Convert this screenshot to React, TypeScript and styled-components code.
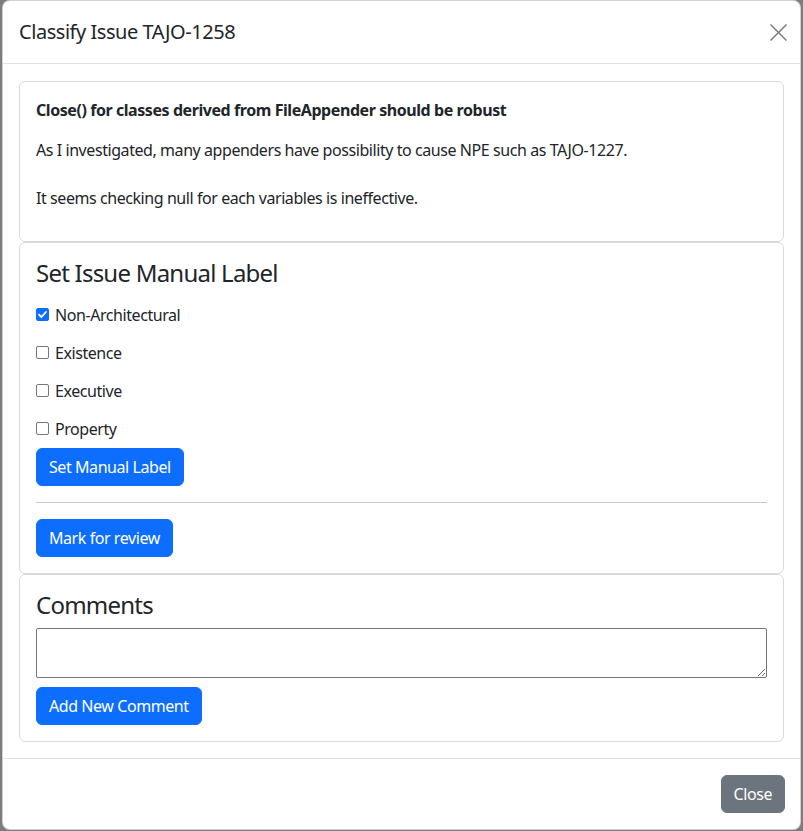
import React, { useState } from "react";
import styled, { createGlobalStyle } from "styled-components";

const GlobalStyle = createGlobalStyle`
  html, body {
    margin: 0;
    padding: 0;
  }
  body {
    font-family: "Noto Sans", "Open Sans", sans-serif;
    color: #212529;
    font-size: 16px;
    line-height: 1.5;
    letter-spacing: -0.027em;
  }
  * {
    box-sizing: border-box;
  }
`;

const SBackdrop = styled.div`
  position: relative;
  min-height: 831px;
  background: #7c7c7d;
  padding: 0 2px 1px 2px;
`;

const STopBar = styled.div`
  position: absolute;
  top: 0;
  left: 318px;
  width: 83px;
  height: 1px;
  background: #0c2d66;
`;

const SModal = styled.div`
  position: relative;
  width: 799px;
  background: #fff;
  border: 1px solid rgba(0, 0, 0, 0.175);
  border-radius: 8px;
  display: flex;
  flex-direction: column;
  overflow: hidden;
`;

const SModalHeader = styled.div`
  display: flex;
  align-items: center;
  justify-content: space-between;
  padding: 16px;
  border-bottom: 1px solid #dee2e6;
`;

const STitle = styled.h5`
  margin: 0;
  font-size: 20px;
  font-weight: 400;
  line-height: 30px;
  letter-spacing: -0.023em;
`;

const SCloseX = styled.button`
  width: 24px;
  height: 24px;
  padding: 0;
  margin-right: -6px;
  border: 0;
  background: transparent;
  color: #000;
  opacity: 0.5;
  display: flex;
  align-items: center;
  justify-content: center;
  cursor: pointer;
`;

const SModalBody = styled.div`
  padding: 17px 16px 16px 16px;
`;

const SCard = styled.div`
  border: 1px solid rgba(0, 0, 0, 0.15);
  border-radius: 6px;
  padding: 16px;
`;

const SPara = styled.p<{ last?: boolean }>`
  margin: 0 0 ${(p) => (p.last ? 15 : 16)}px 0;
`;

const SHeading = styled.h4`
  margin: 0 0 8px 0;
  font-size: 24px;
  font-weight: 400;
  line-height: 1.2;
  letter-spacing: -0.032em;
`;

const SCheckRow = styled.label`
  display: flex;
  align-items: center;
  height: 38px;
  gap: 6px;
  cursor: pointer;
`;

const SBox = styled.span<{ checked?: boolean }>`
  width: 13px;
  height: 13px;
  border-radius: 2px;
  flex: none;
  display: flex;
  align-items: center;
  justify-content: center;
  border: 1px solid ${(p) => (p.checked ? "#0d6efd" : "#767676")};
  background: ${(p) => (p.checked ? "#0d6efd" : "#fff")};
`;

const SButton = styled.button<{ variant?: "primary" | "secondary" }>`
  font-family: inherit;
  font-size: 16px;
  line-height: 24px;
  letter-spacing: inherit;
  padding: 6px 12px;
  border-radius: 6px;
  border: 1px solid ${(p) => (p.variant === "secondary" ? "#6c757d" : "#0d6efd")};
  background: ${(p) => (p.variant === "secondary" ? "#6c757d" : "#0d6efd")};
  color: #fff;
  cursor: pointer;
`;

const SRule = styled.hr`
  margin: 16px 0;
  border: 0;
  border-top: 1px solid #c8c8c8;
`;

const STextArea = styled.textarea`
  display: block;
  width: 100%;
  height: 50px;
  margin: 0 0 9px 0;
  border: 1px solid #767676;
  border-radius: 2px;
  font-family: inherit;
  font-size: 13px;
  resize: vertical;
`;

const SModalFooter = styled.div`
  display: flex;
  justify-content: flex-end;
  padding: 12px;
  padding-right: 11px;
  border-top: 1px solid #dee2e6;
  & > button {
    margin: 4px;
  }
`;

const labels = ["Non-Architectural", "Existence", "Executive", "Property"];

const Check = ({ checked }: { checked: boolean }) => (
  <SBox checked={checked}>
    {checked && (
      <svg width="11" height="11" viewBox="0 0 11 11">
        <path
          d="M2 5.6 L4.4 8 L9 3"
          fill="none"
          stroke="#fff"
          strokeWidth="1.8"
          strokeLinecap="round"
          strokeLinejoin="round"
        />
      </svg>
    )}
  </SBox>
);

export default function App() {
  const [picked, setPicked] = useState<string[]>(["Non-Architectural"]);

  const toggle = (label: string) =>
    setPicked((p) =>
      p.includes(label) ? p.filter((l) => l !== label) : [...p, label]
    );

  return (
    <>
      <GlobalStyle />
      <SBackdrop>
        <STopBar />
        <SModal>
          <SModalHeader>
            <STitle>Classify Issue TAJO-1258</STitle>
            <SCloseX aria-label="Close">
              <svg width="17" height="17" viewBox="0 0 17 17">
                <path
                  d="M0.5 0.5 L16.5 16.5 M16.5 0.5 L0.5 16.5"
                  stroke="currentColor"
                  strokeWidth="1.5"
                />
              </svg>
            </SCloseX>
          </SModalHeader>

          <SModalBody>
            <SCard>
              <SPara>
                <b>Close() for classes derived from FileAppender should be robust</b>
              </SPara>
              <SPara last>
                As I investigated, many appenders have possibility to cause NPE
                such as TAJO-1227.
                <br />
                <br />
                It seems checking null for each variables is ineffective.
              </SPara>
            </SCard>

            <SCard>
              <SHeading>Set Issue Manual Label</SHeading>
              {labels.map((l) => (
                <SCheckRow key={l} onClick={() => toggle(l)}>
                  <Check checked={picked.includes(l)} />
                  {l}
                </SCheckRow>
              ))}
              <SButton>Set Manual Label</SButton>
              <SRule />
              <SButton>Mark for review</SButton>
            </SCard>

            <SCard>
              <SHeading>Comments</SHeading>
              <STextArea />
              <SButton>Add New Comment</SButton>
            </SCard>
          </SModalBody>

          <SModalFooter>
            <SButton variant="secondary">Close</SButton>
          </SModalFooter>
        </SModal>
      </SBackdrop>
    </>
  );
}
